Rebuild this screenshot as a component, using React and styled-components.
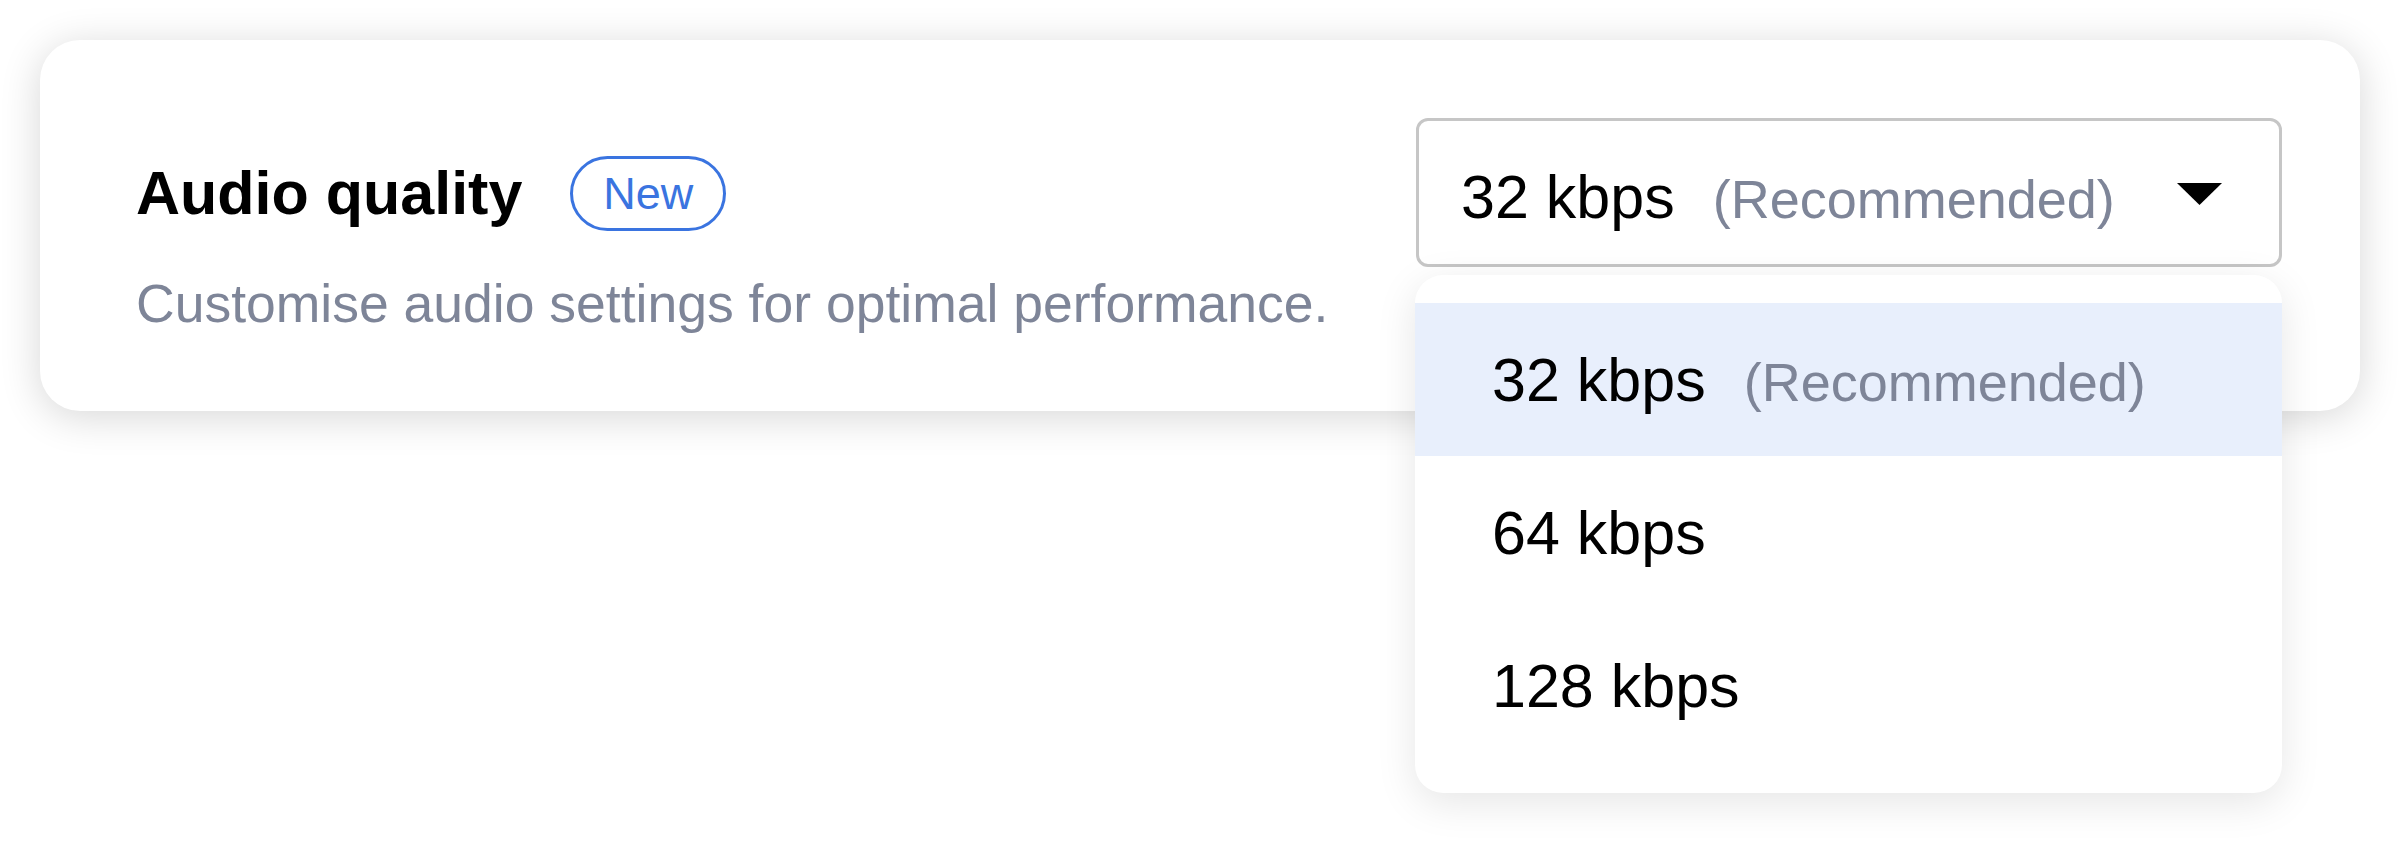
import React from "react";
import styled, { createGlobalStyle } from "styled-components";

const GlobalStyle = createGlobalStyle`
  html, body {
    margin: 0;
    padding: 0;
    background: #ffffff;
  }
  body {
    font-family: "Liberation Sans", Arial, sans-serif;
    color: #000;
  }
`;

const Page = styled.div`
  padding: 40px;
  box-sizing: border-box;
  width: 2400px;
  height: 855px;
  overflow: hidden;
`;

const Card = styled.section`
  box-sizing: border-box;
  height: 371px;
  background: #ffffff;
  border-radius: 40px;
  box-shadow: 0 6px 40px rgba(0, 0, 0, 0.16);
  display: flex;
  justify-content: space-between;
  align-items: flex-start;
  padding: 78px 78px 0 96px;
`;

const Info = styled.div`
  display: flex;
  flex-direction: column;
  padding-top: 38px;
`;

const TitleRow = styled.div`
  display: flex;
  align-items: center;
  gap: 48px;
  height: 75px;
`;

const Title = styled.h2`
  margin: 0;
  font-size: 61px;
  line-height: 61px;
  font-weight: 700;
  color: #000;
`;

const Badge = styled.span`
  box-sizing: border-box;
  height: 75px;
  display: inline-flex;
  align-items: center;
  padding: 0 30px;
  border: 3px solid #3a74e0;
  border-radius: 40px;
  color: #3a74e0;
  font-size: 45px;
  line-height: 1;
`;

const Description = styled.p`
  margin: 41px 0 0;
  font-size: 53.5px;
  line-height: 64px;
  color: #7e8598;
`;

const SelectWrap = styled.div`
  position: relative;
  width: 866px;
`;

const Trigger = styled.div`
  box-sizing: border-box;
  height: 149px;
  border: 3px solid #c6c6c6;
  border-radius: 12px;
  background: #ffffff;
  display: flex;
  align-items: center;
  padding: 8px 57px 0 42px;
`;

const OptionText = styled.span`
  font-size: 61px;
  color: #000;
  white-space: nowrap;
`;

const Hint = styled.span`
  font-size: 54px;
  color: #7e8598;
  margin-left: 38px;
`;

const Caret = styled.svg`
  margin-left: auto;
  margin-bottom: 5px;
  flex: none;
`;

const Menu = styled.ul`
  position: absolute;
  z-index: 2;
  top: calc(100% + 8px);
  left: -1px;
  right: 0;
  margin: 0;
  padding: 28px 0 31px;
  list-style: none;
  background: #ffffff;
  border-radius: 28px;
  box-shadow: 0 10px 40px rgba(0, 0, 0, 0.1);
`;

const Item = styled.li`
  height: 153px;
  display: flex;
  align-items: center;
  padding-left: 77px;
  background: ${(p) => (p.$active ? "#e8effc" : "transparent")};
`;

const options = [
  { label: "32 kbps", hint: "(Recommended)", active: true },
  { label: "64 kbps" },
  { label: "128 kbps" },
];

export default function App() {
  return (
    <>
      <GlobalStyle />
      <Page>
        <Card>
          <Info>
            <TitleRow>
              <Title>Audio quality</Title>
              <Badge>New</Badge>
            </TitleRow>
            <Description>Customise audio settings for optimal performance.</Description>
          </Info>
          <SelectWrap>
            <Trigger>
              <OptionText>
                32 kbps<Hint>(Recommended)</Hint>
              </OptionText>
              <Caret width="45" height="22" viewBox="0 0 45 22" aria-hidden="true">
                <polygon points="0,0 45,0 22.5,22" fill="#000" />
              </Caret>
            </Trigger>
            <Menu>
              {options.map((o) => (
                <Item key={o.label} $active={o.active}>
                  <OptionText>
                    {o.label}
                    {o.hint && <Hint>{o.hint}</Hint>}
                  </OptionText>
                </Item>
              ))}
            </Menu>
          </SelectWrap>
        </Card>
      </Page>
    </>
  );
}
